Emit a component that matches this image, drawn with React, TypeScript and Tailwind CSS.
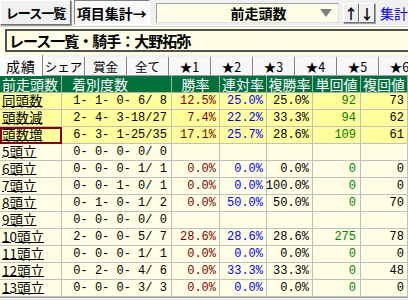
import React from "react";

type Row = {
    label: string;
    count: string;
    win: string;
    ren: string;
    fuku: string;
    tan: string;
    fukuKai: string;
    hi?: boolean;
    focus?: boolean;
};

const rows: Row[] = [
    { label: "同頭数", count: " 1- 1- 0- 6/ 8", win: "12.5%", ren: "25.0%", fuku: "25.0%", tan: "92", fukuKai: "73", hi: true },
    { label: "頭数減", count: " 2- 4- 3-18/27", win: "7.4%", ren: "22.2%", fuku: "33.3%", tan: "94", fukuKai: "62", hi: true },
    { label: "頭数増", count: " 6- 3- 1-25/35", win: "17.1%", ren: "25.7%", fuku: "28.6%", tan: "109", fukuKai: "61", hi: true, focus: true },
    { label: "5頭立", count: " 0- 0- 0- 0/ 0", win: "", ren: "", fuku: "", tan: "", fukuKai: "" },
    { label: "6頭立", count: " 0- 0- 0- 1/ 1", win: "0.0%", ren: "0.0%", fuku: "0.0%", tan: "0", fukuKai: "0" },
    { label: "7頭立", count: " 0- 0- 1- 0/ 1", win: "0.0%", ren: "0.0%", fuku: "100.0%", tan: "0", fukuKai: "0" },
    { label: "8頭立", count: " 0- 1- 0- 1/ 2", win: "0.0%", ren: "50.0%", fuku: "50.0%", tan: "0", fukuKai: "70" },
    { label: "9頭立", count: " 0- 0- 0- 0/ 0", win: "", ren: "", fuku: "", tan: "", fukuKai: "" },
    { label: "10頭立", count: " 2- 0- 0- 5/ 7", win: "28.6%", ren: "28.6%", fuku: "28.6%", tan: "275", fukuKai: "78" },
    { label: "11頭立", count: " 0- 0- 0- 1/ 1", win: "0.0%", ren: "0.0%", fuku: "0.0%", tan: "0", fukuKai: "0" },
    { label: "12頭立", count: " 0- 2- 0- 4/ 6", win: "0.0%", ren: "33.3%", fuku: "33.3%", tan: "0", fukuKai: "48" },
    { label: "13頭立", count: " 0- 0- 0- 3/ 3", win: "0.0%", ren: "0.0%", fuku: "0.0%", tan: "0", fukuKai: "0" },
];

const tabs = ["シェア", "賞金", "全て", "★1", "★2", "★3", "★4", "★5", "★6"];

const headers = ["連対率", "複勝率", "単回値", "複回値"];

const raised =
    "border border-t-white border-l-white border-r-[#707070] border-b-[#707070] shadow-[1px_1px_0_#a0a0a0]";

const cell = "flex items-center border-r border-b border-[#c0c0c0]";
const num = "justify-end whitespace-nowrap font-['Liberation_Mono',monospace] text-[12px] leading-[14px]";
const head = "flex items-center whitespace-nowrap border-r border-b border-[#9cb8a4]";

const App = () => {
    return (
        <div className="w-[408px] h-[300px] overflow-hidden bg-[#f0f0f0] font-['Noto_Sans_CJK_JP',sans-serif] text-black">
            {/* top toolbar */}
            <div className="flex h-[26px] items-start bg-[#f0f0f0]">
                <button className={`h-[25px] w-[72px] whitespace-nowrap bg-[#f0f0f0] text-[13px] font-bold leading-[16px] tracking-[-1px] ${raised}`}>
                    レース一覧
                </button>
                <button className="ml-[3px] h-[25px] w-[77px] whitespace-nowrap border border-t-[#808080] border-l-[#808080] border-r-white border-b-white bg-[#fafafa] text-[14px] font-bold leading-[16px]">
                    項目集計→
                </button>
                <div className="ml-[6px] mt-[3px] flex h-[20px] w-[186px] items-center border border-t-[#a0a0a0] border-l-[#a0a0a0] border-r-[#e0e0e0] border-b-[#e0e0e0] bg-[#ffffe8]">
                    <span className="flex-1 pl-[40px] text-center text-[14px] font-bold leading-[16px]">前走頭数</span>
                    <svg width="12" height="8" viewBox="0 0 12 8" className="mr-[6px]">
                        <polygon points="0,0 12,0 6,8" fill="#808080" />
                    </svg>
                </div>
                <button className={`ml-[4px] mt-[3px] flex h-[20px] w-[16px] items-center justify-center bg-[#f0f0f0] text-[14px] font-bold leading-[16px] ${raised}`}>
                    ↑
                </button>
                <button className={`mt-[3px] flex h-[20px] w-[16px] items-center justify-center bg-[#f0f0f0] text-[14px] font-bold leading-[16px] ${raised}`}>
                    ↓
                </button>
                <span className="ml-[5px] mt-[5px] whitespace-nowrap text-[14px] leading-[16px] text-[#0000ff]">集計</span>
            </div>

            {/* title */}
            <div className="h-[29px] overflow-hidden border-t border-[#d8d8d8] bg-[#ffffe8] pt-[2px] pl-[5px]">
                <div className="flex h-[23px] w-[420px] items-center border-2 border-[#505050] bg-[#ffffe8] pl-[2px]">
                    <span className="whitespace-nowrap text-[15px] font-bold leading-[18px] tracking-[-1px]">
                        レース一覧・騎手：大野拓弥
                    </span>
                </div>
            </div>

            {/* tabs */}
            <div className="flex h-[21px] items-end bg-[#f0f0f0]">
                <div className="flex h-[21px] w-[43px] shrink-0 items-center justify-center border-r border-r-[#808080] bg-[#fcfcfc] text-[14px] leading-[16px] tracking-[1px]">
                    成績
                </div>
                {tabs.map((t, i) => (
                    <div
                        key={i}
                        className="flex h-[19px] w-[42px] shrink-0 items-center justify-center border-b border-r border-b-[#a0a0a0] border-r-[#808080] bg-[#f7f7f7] text-[12.5px] leading-[15px] shadow-[inset_1px_0_0_#ffffff]"
                    >
                        {t}
                    </div>
                ))}
            </div>

            {/* table */}
            <div className="border-b border-[#a0a0a0] bg-[#ffffe6]">
                <div className="grid h-[17px] grid-cols-[62px_110px_48px_47px_46px_48px_47px] bg-[#00703c] text-[14px] leading-[15px] text-white">
                    <div className={`${head} pl-[2px]`}>前走頭数</div>
                    <div className={`${head} pl-[10px]`}>着別度数</div>
                    <div className={`${head} justify-center`}>勝率</div>
                    {headers.map((h, i) => (
                        <div key={i} className={`${head} justify-center`}>
                            {h}
                        </div>
                    ))}
                </div>
                {rows.map((r, i) => (
                    <div
                        key={i}
                        className={`grid h-[17px] grid-cols-[62px_110px_48px_47px_46px_48px_47px] ${r.hi ? "bg-[#ffff9c]" : "bg-[#ffffe6]"}`}
                    >
                        <div className={`${cell} pl-[2px] text-[13.5px] ${r.focus ? "outline outline-2 -outline-offset-2 outline-[#800000]" : ""}`}>
                            <span className="-mt-[2px] inline-block whitespace-nowrap leading-[13px] underline decoration-1 underline-offset-0">{r.label}</span>
                        </div>
                        <div className={`${cell} justify-center whitespace-pre font-['Liberation_Mono',monospace] text-[12px] leading-[14px]`}>
                            {r.count}
                        </div>
                        <div className={`${cell} ${num} pr-[3px] text-[#800000]`}>{r.win}</div>
                        <div className={`${cell} ${num} pr-[3px] text-[#0000ff]`}>{r.ren}</div>
                        <div className={`${cell} ${num} pr-[3px]`}>{r.fuku}</div>
                        <div className={`${cell} ${num} pr-[4px] text-[#008000]`}>{r.tan}</div>
                        <div className={`${cell} ${num} pr-[3px]`}>{r.fukuKai}</div>
                    </div>
                ))}
            </div>
        </div>
    );
};

export default App;
